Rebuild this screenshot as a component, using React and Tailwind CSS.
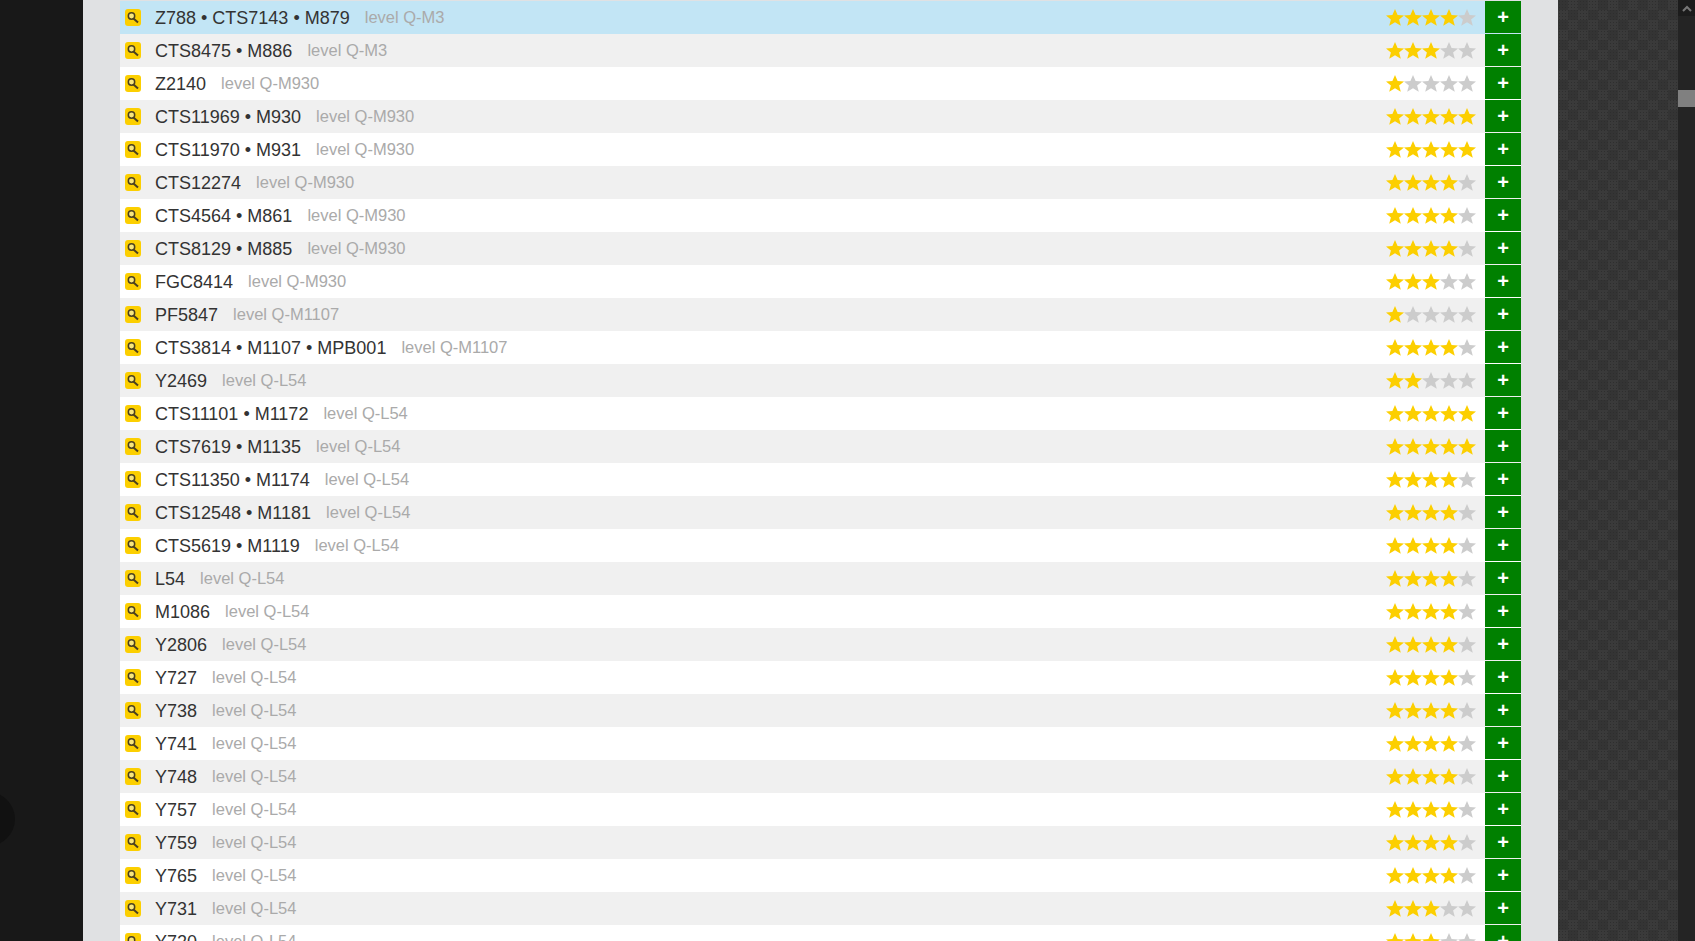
const rows = [
  ['Z788 • CTS7143 • M879', 'level Q-M3', 4],
  ['CTS8475 • M886', 'level Q-M3', 3],
  ['Z2140', 'level Q-M930', 1],
  ['CTS11969 • M930', 'level Q-M930', 5],
  ['CTS11970 • M931', 'level Q-M930', 5],
  ['CTS12274', 'level Q-M930', 4],
  ['CTS4564 • M861', 'level Q-M930', 4],
  ['CTS8129 • M885', 'level Q-M930', 4],
  ['FGC8414', 'level Q-M930', 3],
  ['PF5847', 'level Q-M1107', 1],
  ['CTS3814 • M1107 • MPB001', 'level Q-M1107', 4],
  ['Y2469', 'level Q-L54', 2],
  ['CTS11101 • M1172', 'level Q-L54', 5],
  ['CTS7619 • M1135', 'level Q-L54', 5],
  ['CTS11350 • M1174', 'level Q-L54', 4],
  ['CTS12548 • M1181', 'level Q-L54', 4],
  ['CTS5619 • M1119', 'level Q-L54', 4],
  ['L54', 'level Q-L54', 4],
  ['M1086', 'level Q-L54', 4],
  ['Y2806', 'level Q-L54', 4],
  ['Y727', 'level Q-L54', 4],
  ['Y738', 'level Q-L54', 4],
  ['Y741', 'level Q-L54', 4],
  ['Y748', 'level Q-L54', 4],
  ['Y757', 'level Q-L54', 4],
  ['Y759', 'level Q-L54', 4],
  ['Y765', 'level Q-L54', 4],
  ['Y731', 'level Q-L54', 3],
  ['Y720', 'level Q-L54', 3],
];

function Star({ on }) {
  return (
    <svg width="18" height="17" viewBox="0 0 18 17" className="shrink-0">
      <polygon
        points="9,0 11.6,6 18,6.4 13.1,10.4 14.8,16.8 9,13.3 3.2,16.8 4.9,10.4 0,6.4 6.4,6"
        fill={on ? '#fccf00' : '#cccccc'}
      />
    </svg>
  );
}

function SearchIcon() {
  return (
    <span className="w-4 h-[17px] rounded-[3px] bg-[#fccf00] flex items-center justify-center shrink-0">
      <svg width="14" height="14" viewBox="0 0 14 14" fill="none">
        <line x1="7.5" y1="7.5" x2="12" y2="11.5" stroke="#4a4020" strokeWidth="2" />
        <circle cx="5.5" cy="5" r="3.2" fill="#f7e67e" stroke="#4a4020" strokeWidth="1.5" />
      </svg>
    </span>
  );
}

function Row({ name, level, stars, index }) {
  const bg = index === 0 ? 'bg-[#c2e5f5]' : index % 2 === 1 ? 'bg-[#f0f0f0]' : 'bg-white';
  return (
    <div className={`flex items-stretch h-[33px] ${bg}`}>
      <div className="flex items-center pl-[5px] flex-1 min-w-0">
        <SearchIcon />
        <span className="ml-[14px] pt-px text-[18px] text-[#333333] whitespace-nowrap">{name}</span>
        <span className="ml-[15px] text-[16.5px] text-[#aaaaaa] whitespace-nowrap">{level}</span>
      </div>
      <div className="flex items-center pr-[9px]">
        {[1, 2, 3, 4, 5].map((n) => (
          <Star key={n} on={n <= stars} />
        ))}
      </div>
      <button className="w-9 mb-px bg-[#008000] text-white text-[20px] font-bold leading-none flex items-center justify-center">
        +
      </button>
    </div>
  );
}

export default function App() {
  return (
    <div className="relative flex h-screen overflow-hidden bg-[#181818] font-['Liberation_Sans',Arial,sans-serif]">
      <div className="absolute left-[-12px] top-[792px] w-[27px] h-[54px] rounded-r-full bg-[#111111]" />
      <div className="w-[83px] shrink-0" />
      <div className="w-[1475px] shrink-0 bg-[#e0e1e3] px-[37px] pt-px">
        {rows.map((r, i) => (
          <Row key={i} name={r[0]} level={r[1]} stars={r[2]} index={i} />
        ))}
      </div>
      <div className="flex-1 bg-[#363636] [background-image:radial-gradient(#2e2e2e_0.8px,transparent_1px),repeating-conic-gradient(#3a3a3a_0_25%,#343434_0_50%)] [background-size:3px_3px,20px_20px]" />
      <div className="w-[17px] shrink-0 bg-[#242424] flex flex-col">
        <div className="h-4 flex items-center justify-center bg-[#1c1c1c]">
          <svg width="10" height="7" viewBox="0 0 10 7">
            <polyline points="1,6 5,2 9,6" fill="none" stroke="#777777" strokeWidth="2" />
          </svg>
        </div>
        <div className="mt-[74px] h-[17px] bg-[#808080]" />
      </div>
    </div>
  );
}
